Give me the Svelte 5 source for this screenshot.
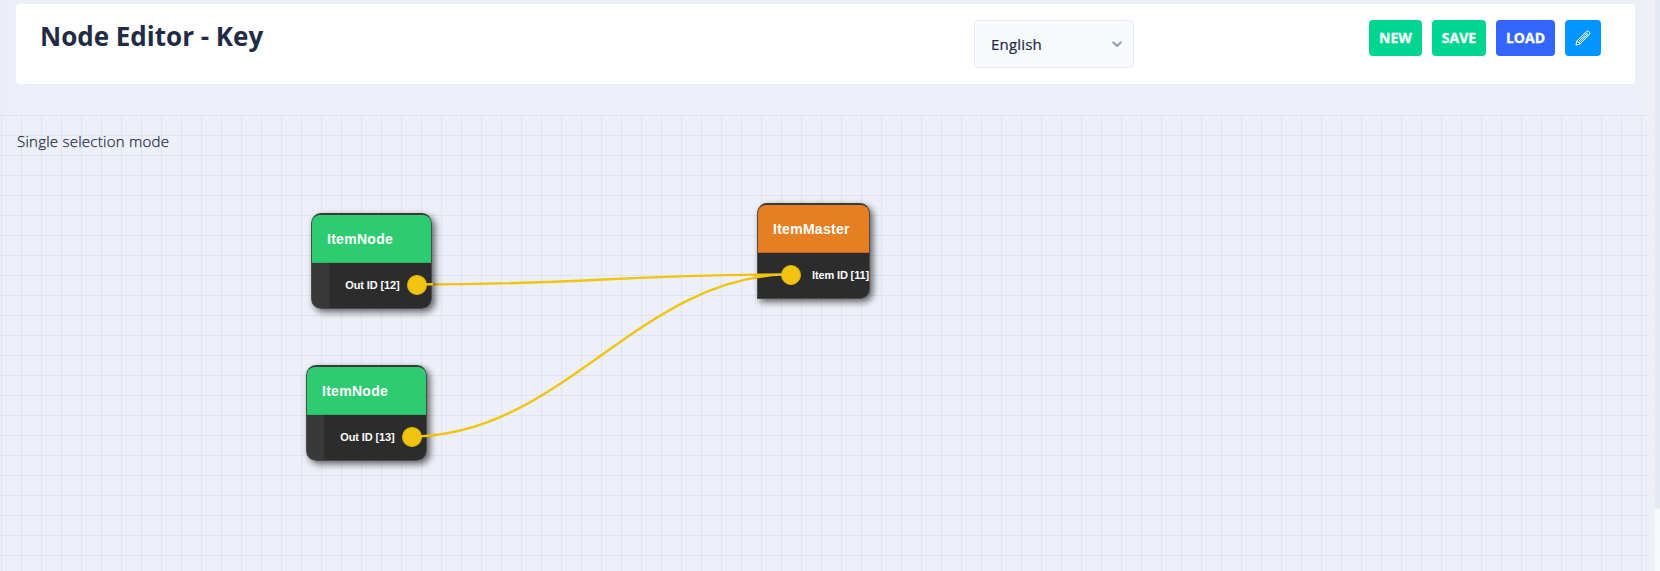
<script>
  const buttons = [
    { label: 'NEW', tone: 'success', width: 53 },
    { label: 'SAVE', tone: 'success', width: 54 },
    { label: 'LOAD', tone: 'primary', width: 59 }
  ];
  const nodes = [
    { title: 'ItemNode', port: 'Out ID [12]', kind: 'out', x: 311, y: 213, width: 121 },
    { title: 'ItemNode', port: 'Out ID [13]', kind: 'out', x: 306, y: 365, width: 121 },
    { title: 'ItemMaster', port: 'Item ID [11]', kind: 'in', x: 757, y: 203, width: 113 }
  ];
</script>

<div class="page">
  <div class="content">
    <header>
      <h1>Node Editor - Key</h1>
      <div class="select">
        <span>English</span>
        <svg width="10" height="7" viewBox="0 0 10 7"><path d="M1.3 1.4 5 4.9 8.7 1.4" fill="none" stroke="#8f9bb3" stroke-width="2" stroke-linecap="round" stroke-linejoin="round" /></svg>
      </div>
      <div class="actions">
        {#each buttons as b}
          <button class={b.tone} style:width="{b.width}px">{b.label}</button>
        {/each}
        <button class="info" aria-label="Edit">
          <svg width="16" height="16" viewBox="0 0 16 16" fill="none" stroke="#fff" stroke-width="1" stroke-linejoin="round">
            <path d="M.9 15.1 2 10.8 11.6 1.5Q12.8.5 14.2 1.8 15.5 3.2 14.5 4.4L5.2 14Z" />
            <path d="M2 10.8 5.2 14M3.3 11.9 12.4 2.9M4.3 12.9 13.3 3.8M10.4 2.7 13.4 5.6" />
          </svg>
        </button>
      </div>
    </header>
    <main>
      <p>Single selection mode</p>
      <svg class="wires" width="1650" height="456" viewBox="0 115 1650 456">
        <path d="M416 284.5C587 284.5 620 274.5 791 274.5" />
        <path d="M411 436.5C563 436.5 639 274.5 791 274.5" />
      </svg>
      {#each nodes as n}
        <section class="node {n.kind}" style:left="{n.x}px" style:top="{n.y - 115}px" style:width="{n.width}px">
          <h2>{n.title}</h2>
          <div class="row"><span>{n.port}</span><i></i></div>
        </section>
      {/each}
      <svg class="wires" width="1650" height="456" viewBox="0 115 1650 456">
        <path d="M425 284.4 433 284.3M420 436.4Q428 436 434 435M756 274.8Q770 274.5 782 274.5M756 277.4Q770 275 782 274.6" />
      </svg>
    </main>
  </div>
  <div class="scrollbar"><div></div></div>
</div>

<style>
  :global(body) { background: #edf1f7; overflow: hidden; }
  * { box-sizing: border-box; }
  .page { display: flex; width: 1660px; height: 571px; background: #edf1f7; font-family: "Open Sans", sans-serif; color: #222b45; }
  .content { width: 1655px; padding-top: 4px; background: linear-gradient(90deg, #e9edf5 0, #edf0f8 16px, #edf0f8 1635px, #edf1f7 1650px); }
  header { display: flex; align-items: flex-start; width: 1619px; height: 80px; margin: 0 0 31px 16px; padding: 16px 34px 0 24px; background: #fff; border-radius: 4px; }
  h1 { margin: -2px 0 0; width: 934px; font-size: 26px; line-height: 36px; font-weight: 700; white-space: nowrap; }
  .select { display: flex; align-items: center; justify-content: space-between; width: 160px; height: 48px; padding: 0 11px 0 16px; border: 1px solid #e4e9f2; border-radius: 4px; background: #f7f9fc; font-size: 15px; line-height: 24px; font-weight: 400; letter-spacing: .2px; -webkit-text-stroke: .2px #222b45; }
  .actions { display: flex; gap: 10px; margin-left: auto; }
  button { height: 36px; padding: 0; border: 0; border-radius: 4px; color: #fff; font: 700 14px/16px "Open Sans", sans-serif; -webkit-text-stroke: .3px #fff; }
  .success { background: #00d68f; }
  .primary { background: #3366ff; }
  .info { display: flex; align-items: center; justify-content: center; width: 36px; background: #0095ff; }
  main { position: relative; width: 1650px; height: 456px; overflow: hidden; background-color: #edf0f8; background-image: linear-gradient(#e0e4ed 1px, transparent 1px), linear-gradient(90deg, #e0e4ed 1px, transparent 1px); background-size: 20px 20px; background-position: 1px 0; }
  p { margin: 0; padding: 14px 0 0 17px; font-size: 15px; line-height: 24px; font-weight: 300; letter-spacing: .25px; -webkit-text-stroke: .25px #222b45; }
  .wires { position: absolute; left: 0; top: 0; }
  .wires path { fill: none; stroke: #f1c40f; stroke-width: 2.4; }
  .node { position: absolute; height: 96px; border: 1px solid #4b4b4b; border-top: 2px solid #393939; border-radius: 10px; background: #2c2c2c; color: #fff; font-family: "Liberation Sans", sans-serif; box-shadow: 3px 3px 7px rgba(0, 0, 0, .6); }
  .out { background: linear-gradient(90deg, #393939 16px, #2c2c2c 18px); }
  .in { border-bottom-left-radius: 0; }
  h2 { margin: 0; height: 48px; padding: 0 15px; border-radius: 8px 8px 0 0; background: #2ecc71; border-bottom: 1px solid #29b765; font-size: 14px; line-height: 48px; font-weight: 700; letter-spacing: .28px; }
  .in h2 { background: #e67e22; border-bottom-color: #bd6a20; }
  .row { display: flex; align-items: center; justify-content: flex-end; gap: 7.5px; height: 44px; padding-right: 4.5px; font-size: 11px; font-weight: 700; letter-spacing: -.12px; white-space: nowrap; }
  .in .row { flex-direction: row-reverse; gap: 11px; padding: 0 0 0 23px; letter-spacing: -.14px; }
  i { flex: none; width: 20px; height: 20px; border: 1px solid #dcb310; border-radius: 50%; background: #f1c40f; }
  .out i { width: 19.5px; }
  .scrollbar { width: 5px; background: #f7f9fc; }
  .scrollbar div { height: 509px; background: #e4e9f2; border-radius: 0 0 2.5px 2.5px; }
</style>
